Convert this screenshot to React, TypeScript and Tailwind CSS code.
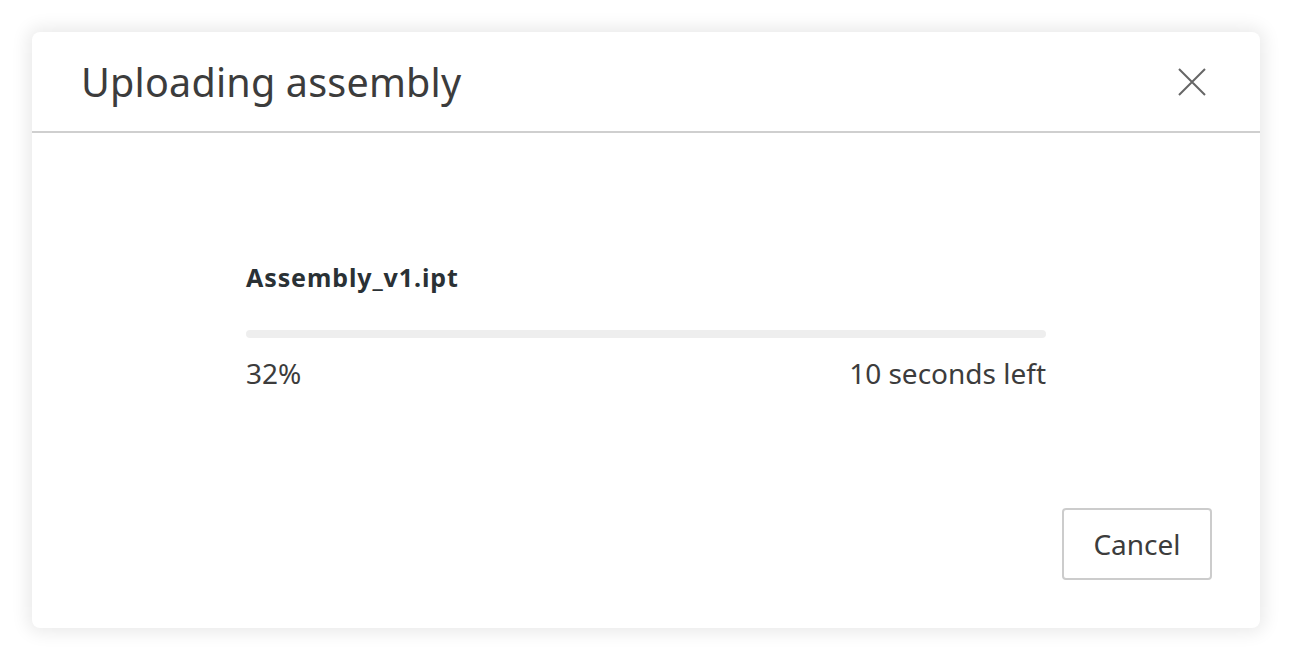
export default function App() {
  const font = { fontFamily: '"Noto Sans", "Open Sans", sans-serif' }
  return (
    <div className="w-[1292px] h-[660px] bg-white pt-8 pl-8" style={font}>
      <div className="w-[1228px] h-[596px] bg-white rounded-lg shadow-[0_0_18px_4px_rgba(0,0,0,0.09)] flex flex-col">
        {/* Header */}
        <div className="h-[101px] flex items-center justify-between pl-[49px] pr-[54px] border-b-2 border-[#cfcfcf] shrink-0">
          <h1 className="text-[39.5px] leading-[48px] text-[#3c3c3c] tracking-[0.2px]">Uploading assembly</h1>
          <svg width="28" height="28" viewBox="0 0 28 28" className="text-[#666666]">
            <path d="M1 1 L27 27 M27 1 L1 27" stroke="currentColor" strokeWidth="2" fill="none" />
          </svg>
        </div>

        {/* Body */}
        <div className="flex-1 flex flex-col">
          <div className="w-[800px] mx-auto pt-[128px]">
            <div className="text-[25px] leading-[32px] font-bold text-[#2a3135] tracking-[0.9px]">Assembly_v1.ipt</div>
            <div className="mt-[37px] h-[8px] w-full rounded-full bg-[#eeeeee]" />
            <div className="mt-[17px] flex justify-between text-[28px] leading-[36px] text-[#3c3c3c]">
              <span>32%</span>
              <span>10 seconds left</span>
            </div>
          </div>
          <div className="mt-auto flex justify-end pr-[48px] pb-[48px]">
            <button className="w-[150px] h-[72px] border-2 border-[#cccccc] rounded-[4px] text-[28px] text-[#3c3c3c] bg-white">
              Cancel
            </button>
          </div>
        </div>
      </div>
    </div>
  )
}
